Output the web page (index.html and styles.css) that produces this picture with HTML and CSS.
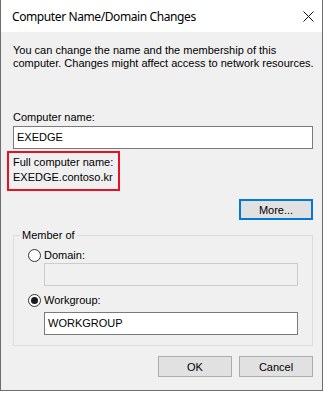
FILE: index.html
```html
<!DOCTYPE html>
<html>
<head>
<meta charset="utf-8">
<title>Computer Name/Domain Changes</title>
<link rel="stylesheet" href="styles.css">
</head>
<body>
<div class="window">
  <div class="titlebar">
    <span class="title">Computer Name/Domain Changes</span>
    <svg class="close" width="11" height="11" viewBox="0 0 11 11"><path d="M0.5 0.5 L10.5 10.5 M10.5 0.5 L0.5 10.5" stroke="#111" stroke-width="1" fill="none"/></svg>
  </div>
  <div class="content">
    <p class="desc">You can change the name and the membership of this<br>computer. Changes might affect access to network resources.</p>
    <label class="label">Computer name:</label>
    <div class="field">EXEDGE</div>
    <div class="fullname">
      <div>Full computer name:</div>
      <div>EXEDGE.contoso.kr</div>
    </div>
    <button class="btn btn-default">More...</button>
    <fieldset class="group">
      <legend>Member of</legend>
      <div class="radio-row"><span class="radio"></span><span>Domain:</span></div>
      <div class="field field-sub disabled"></div>
      <div class="radio-row radio-row-2"><span class="radio checked"></span><span>Workgroup:</span></div>
      <div class="field field-sub field-wg">WORKGROUP</div>
    </fieldset>
    <div class="actions">
      <button class="btn">OK</button>
      <button class="btn">Cancel</button>
    </div>
  </div>
</div>
</body>
</html>
```
FILE: styles.css
```css
html, body {
  margin: 0;
  padding: 0;
  background: #ffffff;
}
.window {
  width: 323px;
  height: 391px;
  box-sizing: border-box;
  border: 1px solid #6d6d6d;
  border-top: none;
  background: #f0f0f0;
  display: flex;
  flex-direction: column;
  font-family: "Liberation Sans", Arial, sans-serif;
  font-size: 11px;
  color: #000;
}
.titlebar {
  height: 32px;
  background: #ffffff;
  display: flex;
  align-items: center;
  justify-content: space-between;
  padding: 0 8px 0 11px;
  flex-shrink: 0;
}
.title {
  font-family: "Noto Sans", sans-serif;
  font-size: 12px;
  letter-spacing: -0.4px;
  color: #000;
  margin-top: 1px;
}
.close {
  display: block;
}
.content {
  display: flex;
  flex-direction: column;
  padding: 12px 9px 0 12px;
}
.desc {
  margin: 0;
  line-height: 13px;
  white-space: nowrap;
}
.label {
  display: block;
  margin-top: 41px;
  line-height: 13px;
}
.field {
  margin-top: 2px;
  height: 23px;
  box-sizing: border-box;
  border: 1px solid #7a7a7a;
  background: #ffffff;
  padding: 0 3px;
  line-height: 21px;
  width: 300px;
}
.fullname {
  margin-top: 2px;
  margin-left: -6px;
  width: 113px;
  height: 40px;
  box-sizing: border-box;
  border: 2px solid #e81123;
  padding: 2px 4px 4px 4px;
  line-height: 15px;
}
.btn {
  width: 74px;
  height: 21px;
  box-sizing: border-box;
  border: 1px solid #adadad;
  background: #e1e1e1;
  font-family: "Liberation Sans", Arial, sans-serif;
  font-size: 11px;
  color: #000;
  padding: 0;
  margin: 0;
}
.btn-default {
  align-self: flex-end;
  margin-top: 8px;
  border: 2px solid #0078d7;
}
.group {
  margin: 9px 0 0 0;
  width: 300px;
  box-sizing: border-box;
  border: 1px solid #dcdcdc;
  padding: 7px 14px 10px 14px;
  min-width: 0;
}
.group legend {
  margin-left: -8px;
  padding: 0 2px;
  line-height: 13px;
}
.radio-row {
  display: flex;
  align-items: center;
  gap: 3px;
  height: 13px;
  line-height: 13px;
}
.radio-row-2 {
  margin-top: 8px;
}
.radio {
  width: 13px;
  height: 13px;
  box-sizing: border-box;
  border: 1px solid #333333;
  border-radius: 50%;
  background: #ffffff;
  display: flex;
  align-items: center;
  justify-content: center;
}
.radio.checked::after {
  content: "";
  width: 7px;
  height: 7px;
  border-radius: 50%;
  background: #1a1a1a;
}
.field-sub {
  width: 254px;
  margin-left: 16px;
  margin-top: 1px;
}
.field-wg {
  margin-top: 5px;
}
.disabled {
  border-color: #cccccc;
  background: #f0f0f0;
}
.actions {
  display: flex;
  justify-content: flex-end;
  gap: 7px;
  margin-top: 10px;
}
```
